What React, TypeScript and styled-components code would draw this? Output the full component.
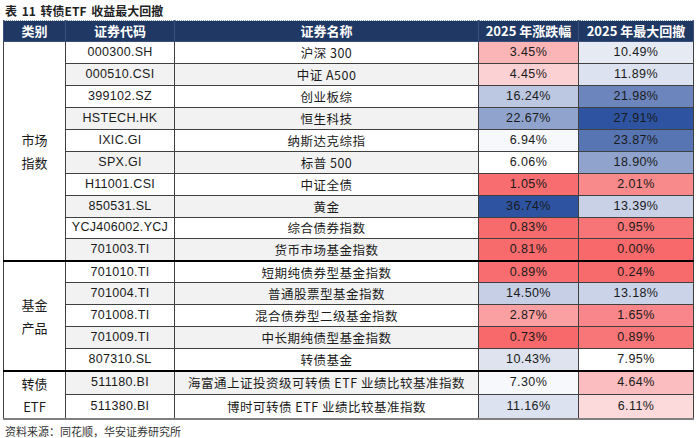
import React, { FC } from "react";
import styled, { createGlobalStyle } from "styled-components";

const GlobalStyle = createGlobalStyle`
  html, body {
    margin: 0;
    padding: 0;
    background: #ffffff;
  }
`;

const cjk = `"Noto Sans CJK SC", "Liberation Sans", sans-serif`;
const num = `"Liberation Sans Narrow", "Liberation Sans", "Noto Sans CJK SC", sans-serif`;

type Row = {
  code: string;
  name: string;
  ret: string;
  retBg: string;
  dd: string;
  ddBg: string;
};

type Group = {
  label: [string, string];
  rows: Row[];
};

const groups: Group[] = [
  {
    label: ["市场", "指数"],
    rows: [
      { code: "000300.SH", name: "沪深 300", ret: "3.45%", retBg: "#fbb5b7", dd: "10.49%", ddBg: "#e6eaf3" },
      { code: "000510.CSI", name: "中证 A500", ret: "4.45%", retBg: "#fcd1d3", dd: "11.89%", ddBg: "#dce2ef" },
      { code: "399102.SZ", name: "创业板综", ret: "16.24%", retBg: "#bcc7e1", dd: "21.98%", ddBg: "#6c85bd" },
      { code: "HSTECH.HK", name: "恒生科技", ret: "22.67%", retBg: "#8fa3cc", dd: "27.91%", ddBg: "#2e54a1" },
      { code: "IXIC.GI", name: "纳斯达克综指", ret: "6.94%", retBg: "#f6f8fc", dd: "23.87%", ddBg: "#5875b3" },
      { code: "SPX.GI", name: "标普 500", ret: "6.06%", retBg: "#ffffff", dd: "18.90%", ddBg: "#8fa3cc" },
      { code: "H11001.CSI", name: "中证全债", ret: "1.05%", retBg: "#f86d6f", dd: "2.01%", ddBg: "#f98a8c" },
      { code: "850531.SL", name: "黄金", ret: "36.74%", retBg: "#2e54a1", dd: "13.39%", ddBg: "#c8d1e6" },
      { code: "YCJ406002.YCJ", name: "综合债券指数", ret: "0.83%", retBg: "#f86b6d", dd: "0.95%", ddBg: "#f87577" },
      { code: "701003.TI", name: "货币市场基金指数", ret: "0.81%", retBg: "#f86b6d", dd: "0.00%", ddBg: "#f8696b" },
    ],
  },
  {
    label: ["基金", "产品"],
    rows: [
      { code: "701010.TI", name: "短期纯债券型基金指数", ret: "0.89%", retBg: "#f86e70", dd: "0.24%", ddBg: "#f86b6d" },
      { code: "701004.TI", name: "普通股票型基金指数", ret: "14.50%", retBg: "#c6cfe5", dd: "13.18%", ddBg: "#cad3e7" },
      { code: "701008.TI", name: "混合债券型二级基金指数", ret: "2.87%", retBg: "#faa0a2", dd: "1.65%", ddBg: "#f8868a" },
      { code: "701009.TI", name: "中长期纯债型基金指数", ret: "0.73%", retBg: "#f8696b", dd: "0.89%", ddBg: "#f87678" },
      { code: "807310.SL", name: "转债基金", ret: "10.43%", retBg: "#dee3ef", dd: "7.95%", ddBg: "#ffffff" },
    ],
  },
  {
    label: ["转债", "ETF"],
    rows: [
      { code: "511180.BI", name: "海富通上证投资级可转债 ETF 业绩比较基准指数", ret: "7.30%", retBg: "#f7f8fc", dd: "4.64%", ddBg: "#fbbdbf" },
      { code: "511380.BI", name: "博时可转债 ETF 业绩比较基准指数", ret: "11.16%", retBg: "#dce2ef", dd: "6.11%", ddBg: "#fcd9da" },
    ],
  },
];

/**
 * Convertible bond ETF return / drawdown table
 */
const App: FC = () => {
  let rowIndex = 0;
  return (
    <>
      <GlobalStyle />
      <Page>
        <Caption>表 11 转债ETF 收益最大回撤</Caption>
        <Table>
          <colgroup>
            <col style={{ width: 62 }} />
            <col style={{ width: 109 }} />
            <col style={{ width: 304 }} />
            <col style={{ width: 100 }} />
            <col style={{ width: 115 }} />
          </colgroup>
          <thead>
            <tr>
              <HeadCell>类别</HeadCell>
              <HeadCell>证券代码</HeadCell>
              <HeadCell>证券名称</HeadCell>
              <HeadCell>2025 年涨跌幅</HeadCell>
              <HeadCell>2025 年最大回撤</HeadCell>
            </tr>
          </thead>
          <tbody>
            {groups.map((group, gi) =>
              group.rows.map((row, ri) => {
                const striped = rowIndex++ % 2 === 1;
                const groupStart = ri === 0 && gi > 0;
                return (
                  <BodyRow key={row.code} $groupStart={groupStart}>
                    {ri === 0 && (
                      <CategoryCell rowSpan={group.rows.length}>
                        {group.label[0]}
                        <br />
                        {group.label[1]}
                      </CategoryCell>
                    )}
                    <CodeCell $striped={striped}>{row.code}</CodeCell>
                    <NameCell $striped={striped}>{row.name}</NameCell>
                    <ValueCell $bg={row.retBg}>{row.ret}</ValueCell>
                    <ValueCell $bg={row.ddBg}>{row.dd}</ValueCell>
                  </BodyRow>
                );
              })
            )}
          </tbody>
        </Table>
        <Source>资料来源：同花顺，华安证券研究所</Source>
      </Page>
    </>
  );
};

export default App;

const Page = styled.div`
  width: 700px;
  height: 438px;
  padding: 3px 7px 0 3px;
  box-sizing: border-box;
  overflow: hidden;
`;

const Caption = styled.div`
  font-family: ${cjk};
  font-size: 12px;
  font-weight: 700;
  color: #222222;
  height: 17px;
  line-height: 16px;
  padding-left: 2px;
  word-spacing: 2px;
`;

const Table = styled.table`
  width: 690px;
  table-layout: fixed;
  border-collapse: collapse;
  border-bottom: 2px solid #7f7f7f;
`;

const HeadCell = styled.th`
  height: 20px;
  padding: 0;
  background: #1f3864;
  color: #ffffff;
  font-family: ${cjk};
  font-size: 13px;
  font-weight: 700;
  line-height: 18px;
  text-align: center;
  border: 1px solid #3c4f7a;
  border-top: 1px dotted #8090b0;
`;

const BodyRow = styled.tr<{ $groupStart: boolean }>`
  height: 21.95px;
  & > td {
    border-top: ${(p) => (p.$groupStart ? "2px solid #000000" : "1px solid #404040")};
  }
`;

const cellBase = `
  padding: 0;
  text-align: center;
  white-space: nowrap;
  color: #1a1a1a;
  line-height: 17px;
  border: 1px solid #404040;
`;

const CategoryCell = styled.td`
  ${cellBase}
  font-family: ${cjk};
  font-size: 13px;
  line-height: 23px;
  background: #ffffff;
  border-left: 1px solid #404040;
`;

const CodeCell = styled.td<{ $striped: boolean }>`
  ${cellBase}
  font-family: ${num};
  font-size: 12.5px;
  letter-spacing: 0.3px;
  background: ${(p) => (p.$striped ? "#f2f2f2" : "#ffffff")};
`;

const NameCell = styled.td<{ $striped: boolean }>`
  ${cellBase}
  font-family: ${cjk};
  font-size: 12.5px;
  letter-spacing: 0.5px;
  background: ${(p) => (p.$striped ? "#f2f2f2" : "#ffffff")};
`;

const ValueCell = styled.td<{ $bg: string }>`
  ${cellBase}
  font-family: ${num};
  font-size: 12.5px;
  letter-spacing: 0.4px;
  background: ${(p) => p.$bg};
`;

const Source = styled.div`
  margin-top: 4px;
  padding-left: 2px;
  font-family: ${cjk};
  font-size: 11px;
  line-height: 15px;
  color: #333333;
`;
